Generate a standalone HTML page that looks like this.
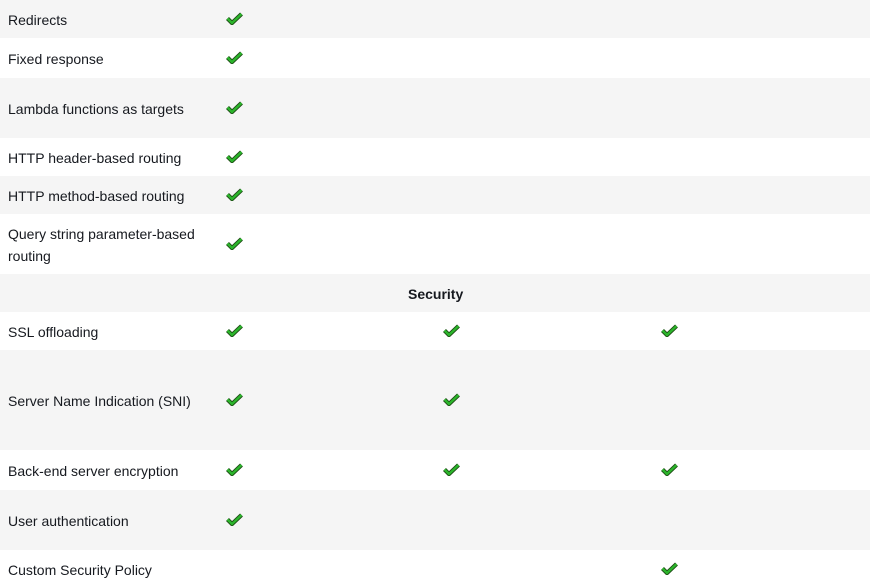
<!DOCTYPE html>
<html><head><style>
body{margin:0;width:870px;height:588px;overflow:hidden;font-family:"Liberation Sans",sans-serif;font-size:14px;color:#16191f;background:#fff}
.r{position:absolute;left:0;width:870px;display:flex;align-items:center}
.g{background:#f5f5f5}
.t{position:absolute;left:8px;line-height:22px;width:210px;top:50%;transform:translateY(calc(-50% + 1px))}
.c{position:absolute;width:17px;height:13px;top:50%;margin-top:-7.5px}
</style></head><body>
<svg width="0" height="0" style="position:absolute"><defs><symbol id="k" viewBox="0 0 17 13"><path d="M1.5 6.5 L6 11 L15.5 2" fill="none" stroke="#1d4a14" stroke-width="4.2" stroke-linejoin="miter"/><path d="M1.5 6.5 L6 11 L15.5 2" fill="none" stroke="#2bb52b" stroke-width="2.4"/></symbol></defs></svg>
<div class="r g" style="top:0;height:38px"><span class="t">Redirects</span><svg class="c" style="left:226px"><use href="#k"/></svg></div>
<div class="r" style="top:38px;height:40px"><span class="t">Fixed response</span><svg class="c" style="left:226px"><use href="#k"/></svg></div>
<div class="r g" style="top:78px;height:60px"><span class="t">Lambda functions as targets</span><svg class="c" style="left:226px"><use href="#k"/></svg></div>
<div class="r" style="top:138px;height:38px"><span class="t">HTTP header-based routing</span><svg class="c" style="left:226px"><use href="#k"/></svg></div>
<div class="r g" style="top:176px;height:38px"><span class="t">HTTP method-based routing</span><svg class="c" style="left:226px"><use href="#k"/></svg></div>
<div class="r" style="top:214px;height:60px"><span class="t" style="width:200px">Query string parameter-based routing</span><svg class="c" style="left:226px"><use href="#k"/></svg></div>
<div class="r g" style="top:274px;height:38px"><span style="position:absolute;left:408px;font-weight:bold;top:12px">Security</span></div>
<div class="r" style="top:312px;height:38px"><span class="t">SSL offloading</span><svg class="c" style="left:226px"><use href="#k"/></svg><svg class="c" style="left:443px"><use href="#k"/></svg><svg class="c" style="left:661px"><use href="#k"/></svg></div>
<div class="r g" style="top:350px;height:100px"><span class="t">Server Name Indication (SNI)</span><svg class="c" style="left:226px"><use href="#k"/></svg><svg class="c" style="left:443px"><use href="#k"/></svg></div>
<div class="r" style="top:450px;height:40px"><span class="t">Back-end server encryption</span><svg class="c" style="left:226px"><use href="#k"/></svg><svg class="c" style="left:443px"><use href="#k"/></svg><svg class="c" style="left:661px"><use href="#k"/></svg></div>
<div class="r g" style="top:490px;height:60px"><span class="t">User authentication</span><svg class="c" style="left:226px"><use href="#k"/></svg></div>
<div class="r" style="top:550px;height:38px"><span class="t">Custom Security Policy</span><svg class="c" style="left:661px"><use href="#k"/></svg></div>
</body></html>
